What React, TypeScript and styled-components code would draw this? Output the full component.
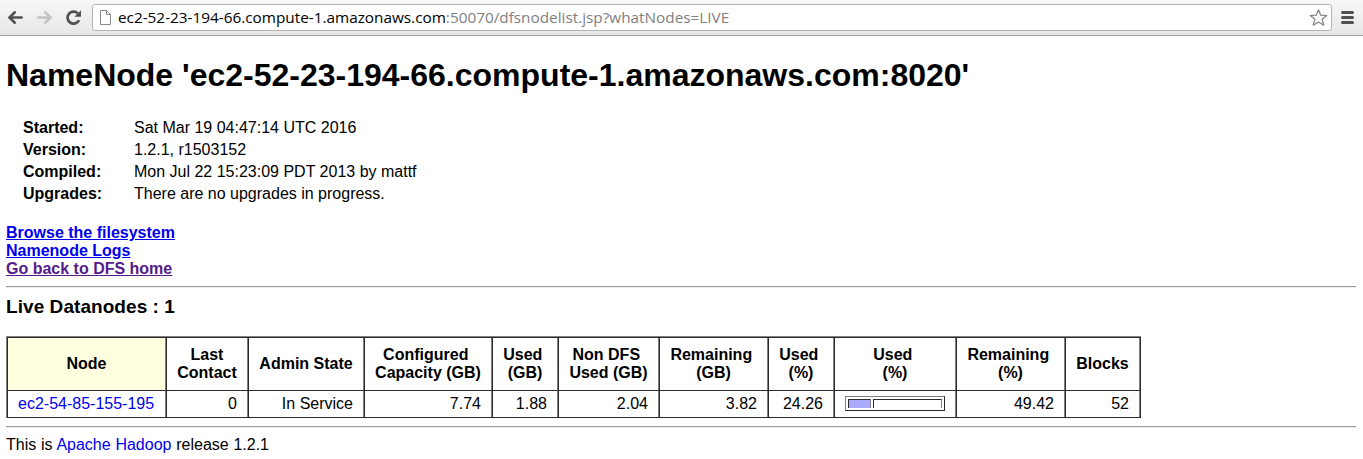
import React from "react";
import styled, { createGlobalStyle } from "styled-components";

const Global = createGlobalStyle`
  * { box-sizing: border-box; }
  body {
    margin: 0;
    background: #fff;
    color: #000;
    font: 16px/18px "Liberation Sans", Arial, sans-serif;
    overflow: hidden;
  }
`;

const Toolbar = styled.header`
  display: flex;
  align-items: center;
  height: 36px;
  padding: 1px 9px 1px 7px;
  background: linear-gradient(#f8f8f8, #e6e6e6);
  border-bottom: 1px solid #a5a5a5;
`;
const NavIcon = styled.svg<{ $gap: number }>`
  width: 18px;
  height: 17px;
  flex: none;
  margin-right: ${(p) => p.$gap}px;
`;
const AddressBar = styled.div`
  display: flex;
  align-items: center;
  flex: 1;
  height: 27px;
  padding: 0 3px 0 6px;
  background: #fff;
  border: 1px solid #b4b4b4;
  border-radius: 3px;
`;
const Url = styled.span`
  flex: 1;
  margin-left: 6px;
  font: 15.32px/19px "Open Sans", "Noto Sans", sans-serif;
  white-space: pre;
  color: #808080;
`;
const Host = styled.span`
  color: #000;
`;
const MenuIcon = styled.svg`
  flex: none;
  margin-left: 9px;
`;

const Page = styled.main`
  padding: 21px 7px 0 6px;
`;
const Title = styled.h1`
  margin: 0;
  font-size: 32px;
  line-height: 37px;
  white-space: nowrap;
`;
const Facts = styled.dl`
  display: grid;
  grid-template-columns: 111px max-content;
  grid-auto-rows: 22px;
  align-items: center;
  margin: 23px 0 0 17px;
`;
const Term = styled.dt`
  font-weight: bold;
`;
const Detail = styled.dd`
  margin: 0;
`;
const Links = styled.nav`
  display: flex;
  flex-direction: column;
  align-items: flex-start;
  margin-top: 19px;
  font-weight: bold;
`;
const PageLink = styled.a<{ $visited?: boolean }>`
  color: ${(p) => (p.$visited ? "#551a8b" : "#0000ee")};
  text-decoration: underline;
`;
const Rule = styled.hr`
  height: 2px;
  margin: 8px 0;
  border: 0;
  border-top: 1px solid #9a9a9a;
  border-bottom: 1px solid #eee;
`;
const Subtitle = styled.h3`
  margin: 0;
  font-size: 19px;
  line-height: 22px;
  letter-spacing: 0.06px;
`;
const NodeTable = styled.table`
  width: 1135px;
  margin-top: 18px;
  table-layout: fixed;
  border-collapse: separate;
  border-spacing: 0;
  border-top: 1px solid #808080;
  border-left: 1px solid #808080;
`;
const HeadCell = styled.th<{ $sorted?: boolean }>`
  height: 54px;
  padding: 0 1px 0 0;
  line-height: 18px;
  white-space: pre;
  border-top: 1px solid #2b2b2b;
  border-right: 1px solid #2b2b2b;
  border-bottom: 1px solid #2b2b2b;
  box-shadow: inset -1px 0 #808080;
  background: ${(p) => (p.$sorted ? "#ffffe0" : "#fff")};
  &:first-child { border-left: 1px solid #2b2b2b; }
`;
const Cell = styled.td`
  height: 27px;
  padding: 0 11px 0 10px;
  text-align: right;
  white-space: nowrap;
  border-right: 1px solid #2b2b2b;
  border-bottom: 1px solid #2b2b2b;
  box-shadow: inset -1px 0 #808080;
  &:first-child { border-left: 1px solid #2b2b2b; text-align: left; }
`;
const NodeLink = styled.a`
  color: #0000ee;
`;
const Meter = styled.div`
  display: flex;
  gap: 2px;
  width: 100px;
  height: 15px;
  margin-bottom: 1px;
  padding: 2px;
  border: 1px solid #2b2b2b;
  border-top-color: #808080;
  border-left-color: #808080;
`;
const MeterPart = styled.div<{ $filled?: boolean }>`
  flex: ${(p) => (p.$filled ? "0 0 23px" : "1")};
  height: 9px;
  border: 1px solid #2b2b2b;
  border-right-color: #808080;
  border-bottom: 0;
  background: ${(p) => (p.$filled ? "#aaaaff" : "#fff")};
`;
const Footer = styled.footer`
  line-height: 18px;
  word-spacing: 0.3px;
`;

const columns: { label: string; width: number }[] = [
  { label: "Node", width: 160 },
  { label: "Last\nContact", width: 82 },
  { label: "Admin State", width: 116 },
  { label: "Configured \nCapacity (GB)", width: 128 },
  { label: "Used \n(GB)", width: 66 },
  { label: "Non DFS \nUsed (GB)", width: 101 },
  { label: "Remaining \n(GB)", width: 109 },
  { label: "Used \n(%)", width: 66 },
  { label: "Used \n(%)", width: 122 },
  { label: "Remaining \n(%)", width: 109 },
  { label: "Blocks", width: 75 },
];

export default function App() {
  return (
    <>
      <Global />
      <Toolbar>
        <NavIcon $gap={11} viewBox="0 0 18 17" fill="none" stroke="#505050" strokeWidth="2.6" strokeLinecap="round">
          <path d="M14.700 8.500H3M7.800 3.300L2.500 8.500l5.300 5.200" />
        </NavIcon>
        <NavIcon $gap={11} viewBox="0 0 18 17" fill="none" stroke="#c4c4c4" strokeWidth="2.6" strokeLinecap="round">
          <path d="M2.300 8.500H14M9.200 3.300l5.300 5.200-5.300 5.200" />
        </NavIcon>
        <NavIcon $gap={9} viewBox="0 0 18 17" fill="none" stroke="#505050" strokeWidth="2.700">
          <path d="M14 11.200A6 6 0 1 1 12.800 4.400" />
          <path d="M16 1.200v6.600H9.400z" fill="#505050" stroke="none" />
        </NavIcon>
        <AddressBar>
          <svg width="13" height="15" viewBox="0 0 13 15" fill="none" stroke="#8a8a8a">
            <path d="M1.500 .5h6l4 4v10h-10zM7.500 .5v4h4" />
          </svg>
          <Url>
            <Host>ec2-52-23-194-66.compute-1.amazonaws.com</Host>:50070/dfsnodelist.jsp?whatNodes=LIVE
          </Url>
          <svg width="19" height="17" viewBox="0 0 19 17" fill="none" stroke="#808080" strokeWidth="1.2" strokeLinejoin="round">
            <path d="M9.500 .7l2.200 5.500 6.100 .3-4.700 3.800 1.700 5.900-5.300-3.200-5.300 3.200 1.700-5.900L1.200 6.500l6.100-.3z" />
          </svg>
        </AddressBar>
        <MenuIcon width="13" height="13" viewBox="0 0 13 13" stroke="#505050" strokeWidth="3" strokeLinecap="round">
          <path d="M1.500 1.500h10M1.500 6.500h10M1.500 11.500h10" />
        </MenuIcon>
      </Toolbar>
      <Page>
        <Title>NameNode 'ec2-52-23-194-66.compute-1.amazonaws.com:8020'</Title>
        <Facts>
          <Term>Started:</Term>
          <Detail>Sat Mar 19 04:47:14 UTC 2016</Detail>
          <Term>Version:</Term>
          <Detail>1.2.1, r1503152</Detail>
          <Term>Compiled:</Term>
          <Detail>Mon Jul 22 15:23:09 PDT 2013 by mattf</Detail>
          <Term>Upgrades:</Term>
          <Detail>There are no upgrades in progress.</Detail>
        </Facts>
        <Links>
          <PageLink>Browse the filesystem</PageLink>
          <PageLink>Namenode Logs</PageLink>
          <PageLink $visited>Go back to DFS home</PageLink>
        </Links>
        <Rule />
        <Subtitle>Live Datanodes : 1</Subtitle>
        <NodeTable>
          <colgroup>
            {columns.map((c, i) => (
              <col key={i} width={c.width} />
            ))}
          </colgroup>
          <thead>
            <tr>
              {columns.map((c, i) => (
                <HeadCell key={i} $sorted={i === 0}>{c.label}</HeadCell>
              ))}
            </tr>
          </thead>
          <tbody>
            <tr>
              <Cell><NodeLink>ec2-54-85-155-195</NodeLink></Cell>
              <Cell>0</Cell>
              <Cell>In Service</Cell>
              <Cell>7.74</Cell>
              <Cell>1.88</Cell>
              <Cell>2.04</Cell>
              <Cell>3.82</Cell>
              <Cell>24.26</Cell>
              <Cell>
                <Meter>
                  <MeterPart $filled />
                  <MeterPart />
                </Meter>
              </Cell>
              <Cell>49.42</Cell>
              <Cell>52</Cell>
            </tr>
          </tbody>
        </NodeTable>
        <Rule />
        <Footer>
          This is <NodeLink>Apache Hadoop</NodeLink> release 1.2.1
        </Footer>
      </Page>
    </>
  );
}
